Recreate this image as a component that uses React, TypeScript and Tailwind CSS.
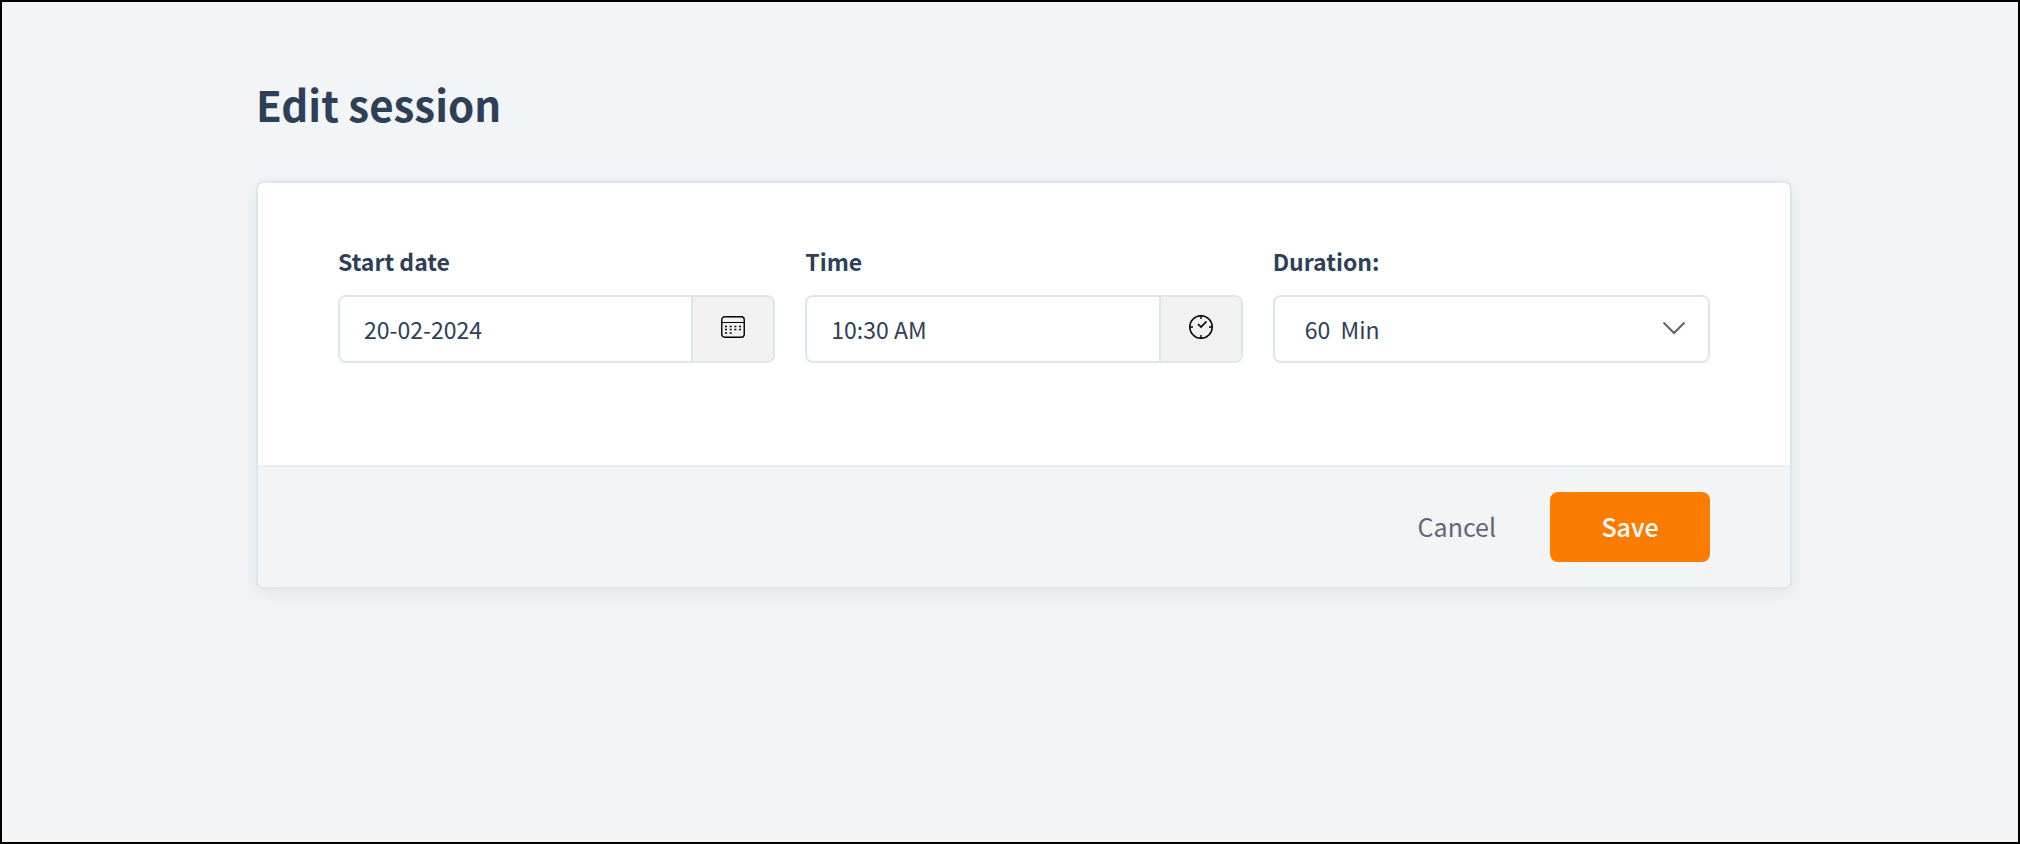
import type { ReactNode } from "react";

function CalendarIcon() {
  return (
    <svg width="24" height="22" viewBox="0 0 24 22" fill="none" stroke="#000" aria-hidden="true">
      <rect x="0.75" y="0.75" width="22.5" height="20.5" rx="3" strokeWidth="1.4" />
      <path d="M1 6.5h22" strokeWidth="1.2" />
      <path d="M4 10.5h16M4 13.5h16" strokeWidth="1.4" strokeDasharray="2 2.67" />
      <path d="M4 17h7" strokeWidth="1.4" strokeDasharray="2 2.67" />
    </svg>
  );
}

function ClockIcon() {
  return (
    <svg width="24" height="24" viewBox="0 0 24 24" fill="none" stroke="#000" aria-hidden="true">
      <circle cx="12" cy="12" r="11.2" strokeWidth="1.5" />
      <path d="M12 1v3M12 20v3M1 12h3M20 12h3" strokeWidth="1.4" />
      <path d="M9 9l3 3 5.5-5.5" strokeWidth="1.7" />
    </svg>
  );
}

function ChevronIcon() {
  return (
    <svg
      width="24"
      height="14"
      viewBox="0 0 24 14"
      fill="none"
      stroke="#5f6368"
      className="pointer-events-none absolute top-6 right-[22px]"
      aria-hidden="true"
    >
      <path d="M1.5 1.5L12 12 22.5 1.5" strokeWidth="2" />
    </svg>
  );
}

type FieldProps = {
  id: string;
  label: string;
  children: ReactNode;
};

function Field({ id, label, children }: FieldProps) {
  return (
    <div className="min-w-0">
      <label htmlFor={id} className="block text-[23px] leading-8 font-bold">
        {label}
      </label>
      <div className="relative mt-[18px] flex h-17 overflow-hidden rounded-lg border-2 border-[#dde7eb] bg-white">
        {children}
      </div>
    </div>
  );
}

type PickerProps = {
  id: string;
  value: string;
  action: string;
  icon: ReactNode;
};

function Picker({ id, value, action, icon }: PickerProps) {
  return (
    <>
      <input id={id} type="text" defaultValue={value} className="min-w-0 flex-1 px-6 text-[23px] outline-none" />
      <button
        type="button"
        aria-label={action}
        className="flex w-[82px] items-center justify-center border-l-2 border-[#dde7eb] bg-[#f1f1f1] pb-1"
      >
        {icon}
      </button>
    </>
  );
}

export default function App() {
  return (
    <main className="min-h-screen border-2 border-black bg-[#f3f4f6] pt-[77px] pl-7 font-['Noto_Sans_CJK_SC',sans-serif] text-[#2e4057]">
      <div className="mx-auto max-w-[1536px]">
        <h1 className="text-[42px] leading-[50px] font-bold">Edit session</h1>

        <form className="mt-[52px] overflow-hidden rounded-lg border-2 border-[#dde7eb] bg-white shadow-[0_4px_18px_#dbe5ea]">
          <div className="grid grid-cols-3 gap-[30px] px-20 pt-[62px] pb-[102px]">
            <Field id="start-date" label="Start date">
              <Picker id="start-date" value="20-02-2024" action="Choose date" icon={<CalendarIcon />} />
            </Field>
            <Field id="time" label="Time">
              <Picker id="time" value="10:30 AM" action="Choose time" icon={<ClockIcon />} />
            </Field>
            <Field id="duration" label="Duration:">
              <select id="duration" className="w-full appearance-none px-[30px] text-[23px] outline-none">
                <option>60{"\u00a0\u00a0"}Min</option>
              </select>
              <ChevronIcon />
            </Field>
          </div>

          <div className="flex items-center justify-end gap-[54px] border-t-2 border-[#e9eff1] bg-[#f3f4f6] px-20 py-[25px] text-[25px]">
            <button type="button" className="text-[#5b687c]">
              Cancel
            </button>
            <button type="submit" className="h-[70px] w-40 rounded-lg bg-[#fc7c00] font-medium text-white">
              Save
            </button>
          </div>
        </form>
      </div>
    </main>
  );
}
